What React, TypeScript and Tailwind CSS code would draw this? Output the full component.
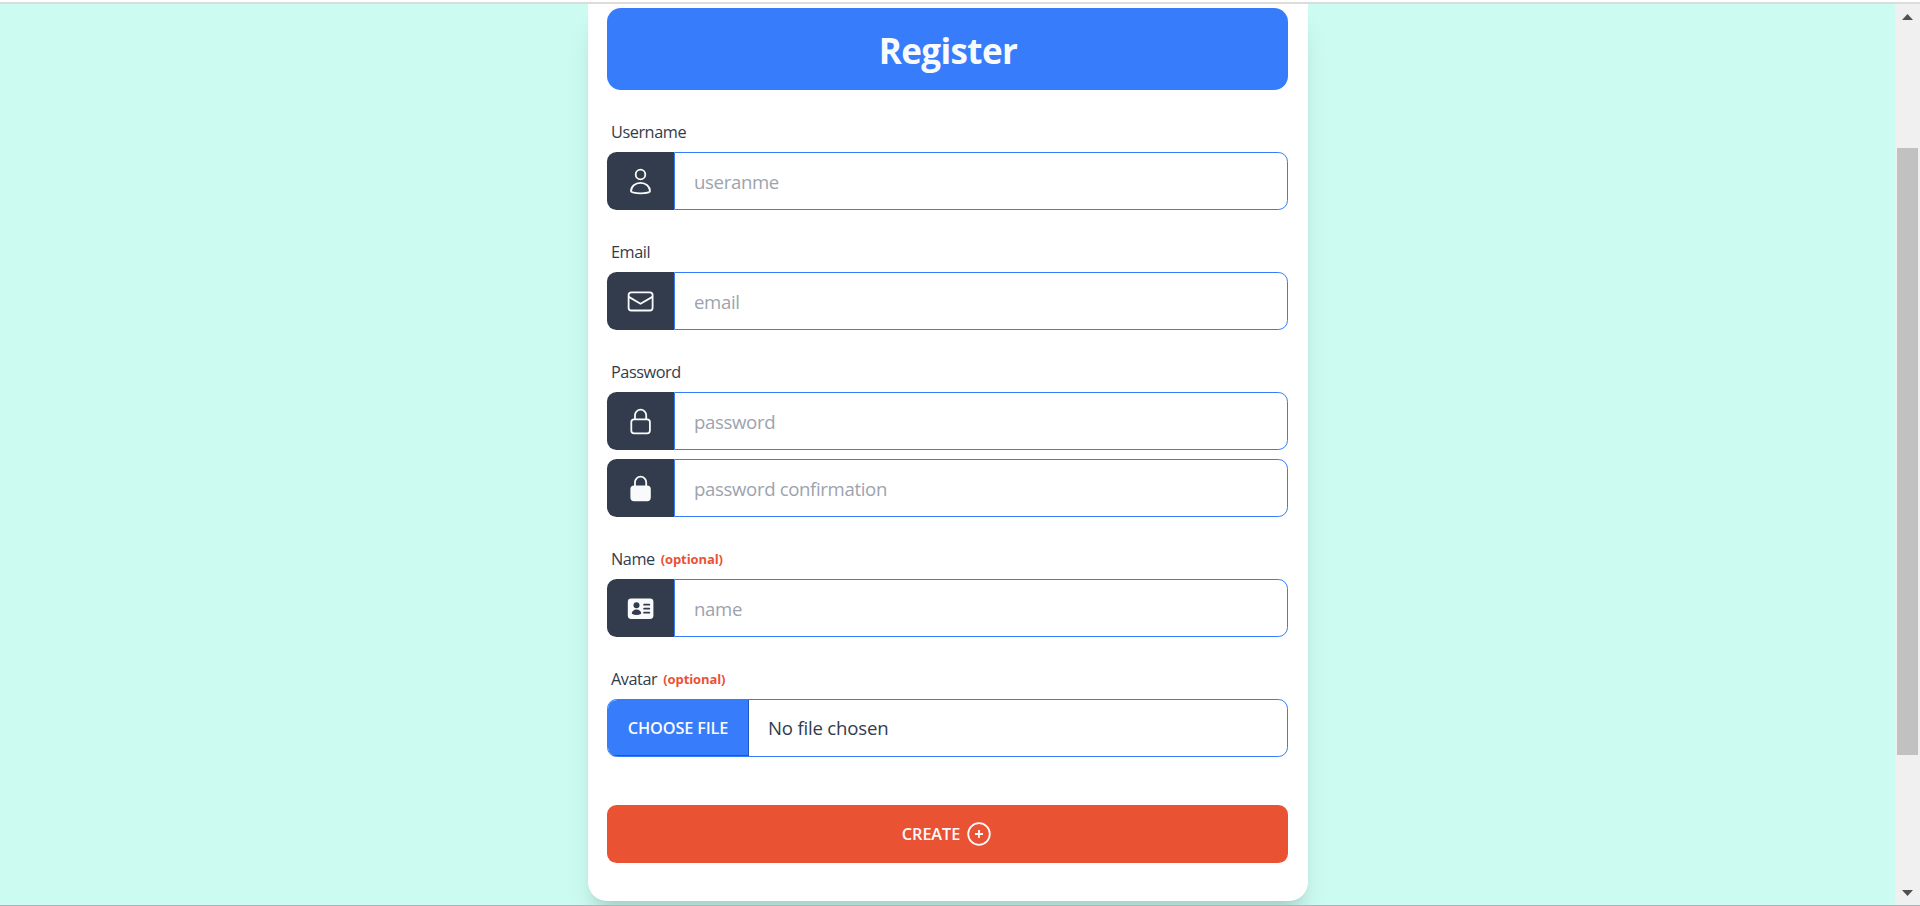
import type { ReactNode } from 'react';

const svgProps = { viewBox: '0 0 29 29', width: 29, height: 29, fill: 'none', stroke: 'currentColor', strokeWidth: 1.8 } as const;

const UserIcon = () => (
  <svg {...svgProps}>
    <circle cx="14.5" cy="7.5" r="4.8" />
    <path d="M5 24.3C5 19.4 9.2 15.8 14.5 15.8S24 19.4 24 24.3C24 25.2 19.8 26.3 14.5 26.3S5 25.2 5 24.3Z" />
  </svg>
);

const MailIcon = () => (
  <svg {...svgProps}>
    <rect x="2.6" y="5.3" width="24" height="18.2" rx="2.8" />
    <path d="M2.8 9.9L14.5 16.7L26.4 9.9" />
  </svg>
);

const LockIcon = ({ filled = false }: { filled?: boolean }) => (
  <svg {...svgProps}>
    <rect x="5.3" y="12.3" width="18.6" height="14" rx="2.8" fill={filled ? 'currentColor' : 'none'} />
    <path d="M9 12.3V8.3a5.6 5.6 0 0 1 11.2 0V12.3" />
  </svg>
);

const CardIcon = () => (
  <svg {...svgProps} stroke="none">
    <rect x="1.8" y="4.5" width="25.6" height="20.4" rx="3.4" fill="currentColor" />
    <g fill="#333c4d">
      <circle cx="10.5" cy="11.2" r="3" />
      <path d="M5.8 19.8C5.8 17.4 8 15.6 10.5 15.6S15.2 17.4 15.2 19.8Q10.5 22.2 5.8 19.8Z" />
      <rect x="17.2" y="9.8" width="7" height="1.8" rx=".9" />
      <rect x="17.2" y="13.8" width="7" height="1.8" rx=".9" />
      <rect x="17.2" y="17.8" width="7" height="1.8" rx=".9" />
    </g>
  </svg>
);

const PlusIcon = () => (
  <svg viewBox="0 0 24 24" width="24" height="24" fill="none" stroke="currentColor" strokeWidth="1.8">
    <circle cx="12" cy="12" r="10.8" />
    <path d="M12 8v8M8 12h8" />
  </svg>
);

function Label({ children, optional }: { children: ReactNode; optional?: boolean }) {
  return (
    <div className="flex h-[62px] items-end pb-[8px] pl-[4px] text-[16.3px] leading-6">
      <span className="tracking-[-0.45px]">{children}</span>
      {optional && <span className="ml-[6px] text-[13px] font-bold tracking-[-0.1px] text-[#ea5234]">(optional)</span>}
    </div>
  );
}

function Field({ icon, placeholder, type = 'text' }: { icon: ReactNode; placeholder: string; type?: string }) {
  return (
    <div className="flex h-[58px]">
      <span className="flex w-[67px] shrink-0 items-center justify-center rounded-l-[9.6px] bg-[#333c4d] text-[#f9fafb]">{icon}</span>
      <input
        type={type}
        placeholder={placeholder}
        className="min-w-0 flex-1 rounded-r-[9.6px] border border-[#377cfb] bg-white pt-[2px] pl-[19px] text-[18.6px] tracking-[-0.35px] outline-none placeholder:text-[#9ca3af]"
      />
    </div>
  );
}

export default function App() {
  return (
    <div className="flex h-[906px] w-full flex-col overflow-hidden border-b border-[#a9b7bd] bg-white pt-[2px] font-['Open_Sans',sans-serif] text-[#333c4d]">
      <div className="h-[2px] shrink-0 bg-[#dcdcdd]" />
      <div className="flex min-h-0 flex-1">
        <main className="flex flex-1 justify-center overflow-hidden bg-[#ccfbf1] pl-[1px]">
          <form className="h-[897px] w-[720px] rounded-b-[19px] bg-white pt-[4px] pr-[20px] pl-[19px] shadow-[0_24px_30px_-6px_rgba(0,0,0,0.1),0_10px_12px_-6px_rgba(0,0,0,0.1)]">
            <h1 className="flex h-[82px] items-center justify-center rounded-[14px] bg-[#377cfb] pt-[4px] pl-[1px] text-[35px] font-bold tracking-[-0.6px] text-[#f9fafb]">Register</h1>
            <Label>Username</Label>
            <Field icon={<UserIcon />} placeholder="useranme" />
            <Label>Email</Label>
            <Field icon={<MailIcon />} placeholder="email" />
            <Label>Password</Label>
            <Field icon={<LockIcon />} placeholder="password" type="password" />
            <div className="h-[9px]" />
            <Field icon={<LockIcon filled />} placeholder="password confirmation" type="password" />
            <Label optional>Name</Label>
            <Field icon={<CardIcon />} placeholder="name" />
            <Label optional>Avatar</Label>
            <div className="flex h-[58px] overflow-hidden rounded-[9.6px] border border-[#377cfb]">
              <button type="button" className="w-[141px] border-r border-b border-[#1d57c4] bg-[#377cfb] pt-[2px] text-[16.3px] font-semibold tracking-[-0.15px] text-[#f9fafb]">
                CHOOSE FILE
              </button>
              <span className="pt-[14px] pl-[19px] text-[18.6px] leading-[27px] tracking-[-0.2px]">No file chosen</span>
            </div>
            <button type="button" className="mt-[48px] flex h-[58px] w-full items-center justify-center gap-[7px] rounded-[9.6px] bg-[#ea5234] pr-[2px] text-[16.3px] font-semibold tracking-[-0.1px] text-[#f9fafb]">
              <span className="pt-[1px]">CREATE</span>
              <PlusIcon />
            </button>
          </form>
        </main>
        <aside className="flex w-[25px] flex-col items-center bg-[#f0f0f0] pt-[10px] pb-[9px]">
          <svg width="11" height="6" viewBox="0 0 11 6" fill="#505050"><path d="M5.5 0L11 6H0Z" /></svg>
          <div className="mt-[128px] h-[607px] w-[21px] bg-[#c1c1c1]" />
          <svg className="mt-auto" width="11" height="6" viewBox="0 0 11 6" fill="#505050"><path d="M0 0H11L5.5 6Z" /></svg>
        </aside>
      </div>
    </div>
  );
}
